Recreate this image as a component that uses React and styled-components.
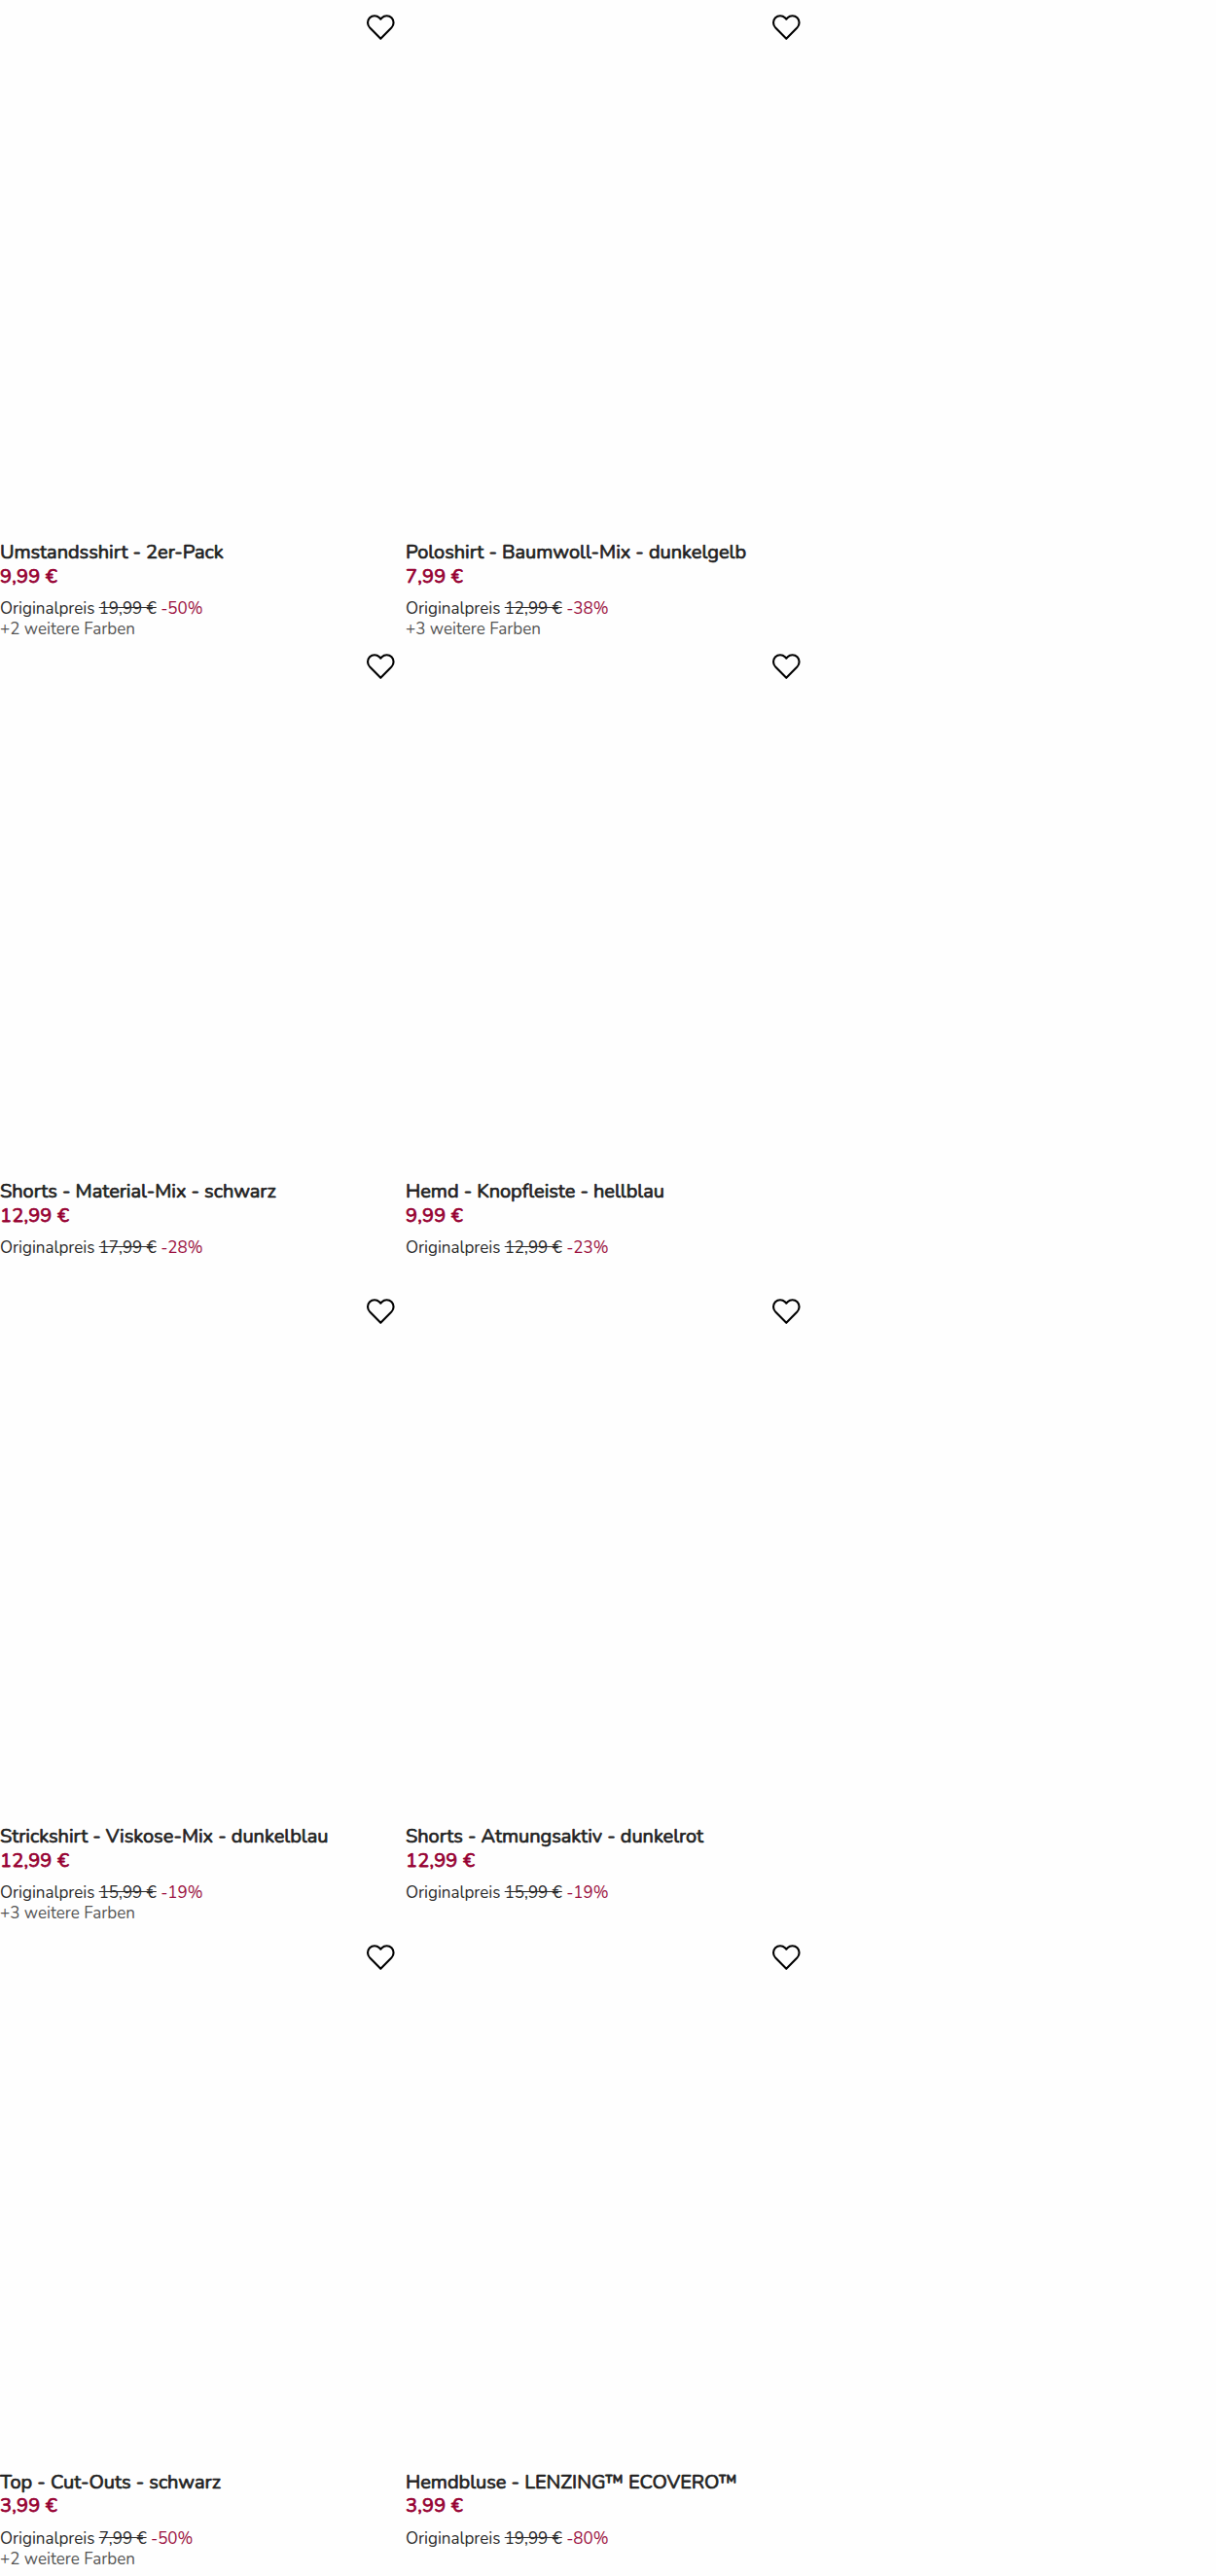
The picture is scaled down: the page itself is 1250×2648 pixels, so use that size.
import React from 'react';
import styled, { createGlobalStyle } from 'styled-components';

const GlobalStyle = createGlobalStyle`
  * { box-sizing: border-box; }
  body { margin: 0; background: #fefefe; color: #222; font-family: Nunito, Lato, "Open Sans", sans-serif; }
  h3, p { margin: 0; }
`;

const Grid = styled.main`
  display: grid;
  grid-template-columns: repeat(2, 417px);
  grid-template-rows: 657px 663px 663.5px 664.5px;
  width: 1250px;
  height: 2648px;
  overflow: hidden;
`;

const Card = styled.article`
  display: flex;
  flex-direction: column;
`;

const Media = styled.div`
  display: flex;
  justify-content: flex-end;
  align-items: flex-start;
  height: 556px;
  padding: 10px 8px 0 0;
`;

const WishButton = styled.button`
  width: 36px;
  height: 36px;
  padding: 0;
  border: 0;
  background: none;
  color: #000;

  svg { display: block; }
`;

const Title = styled.h3`
  font-size: 20px;
  font-weight: 400;
  line-height: 24.5px;
  white-space: nowrap;
  letter-spacing: -0.03px;
  -webkit-text-stroke: 0.7px currentColor;
`;

const Price = styled.p`
  color: #960032;
  font-size: 20px;
  font-weight: 400;
  line-height: 24.5px;
  letter-spacing: 0.2px;
  -webkit-text-stroke: 0.75px currentColor;
`;

const Original = styled.p`
  margin-top: 10px;
  font-size: 17px;
  line-height: 21px;
  letter-spacing: -0.03px;
  color: #2b2b2b;
`;

const Discount = styled.span`
  color: #9b1040;
`;

const Colors = styled.p`
  font-size: 17px;
  line-height: 21px;
  color: #555;
`;

const products = [
  { title: 'Umstandsshirt - 2er-Pack', price: '9,99 €', old: '19,99 €', off: '-50%', colors: 2 },
  { title: 'Poloshirt - Baumwoll-Mix - dunkelgelb', price: '7,99 €', old: '12,99 €', off: '-38%', colors: 3 },
  { title: 'Shorts - Material-Mix - schwarz', price: '12,99 €', old: '17,99 €', off: '-28%' },
  { title: 'Hemd - Knopfleiste - hellblau', price: '9,99 €', old: '12,99 €', off: '-23%' },
  { title: 'Strickshirt - Viskose-Mix - dunkelblau', price: '12,99 €', old: '15,99 €', off: '-19%', colors: 3 },
  { title: 'Shorts - Atmungsaktiv - dunkelrot', price: '12,99 €', old: '15,99 €', off: '-19%' },
  { title: 'Top - Cut-Outs - schwarz', price: '3,99 €', old: '7,99 €', off: '-50%', colors: 2 },
  { title: 'Hemdbluse - LENZING™ ECOVERO™', price: '3,99 €', old: '19,99 €', off: '-80%' },
];

function Heart() {
  return (
    <svg width="36" height="36" viewBox="0 0 36 36" fill="none" stroke="currentColor" strokeWidth="2.1" strokeLinejoin="round">
      <path
        vectorEffect="non-scaling-stroke"
        transform="translate(3.05 2.4) scale(1.27 1.29)"
        d="M20.84 4.61a5.5 5.5 0 0 0-7.78 0L12 5.67l-1.06-1.06a5.5 5.5 0 0 0-7.78 7.78l1.06 1.06L12 21.23l7.78-7.78 1.06-1.06a5.5 5.5 0 0 0 0-7.78z"
      />
    </svg>
  );
}

export default function App() {
  return (
    <>
      <GlobalStyle />
      <Grid>
        {products.map(p => (
          <Card key={p.title}>
            <Media>
              <WishButton aria-label="Merken"><Heart /></WishButton>
            </Media>
            <Title>{p.title}</Title>
            <Price>{p.price}</Price>
            <Original>
              Originalpreis <s>{p.old}</s> <Discount>{p.off}</Discount>
            </Original>
            {p.colors && <Colors>+{p.colors} weitere Farben</Colors>}
          </Card>
        ))}
      </Grid>
    </>
  );
}
